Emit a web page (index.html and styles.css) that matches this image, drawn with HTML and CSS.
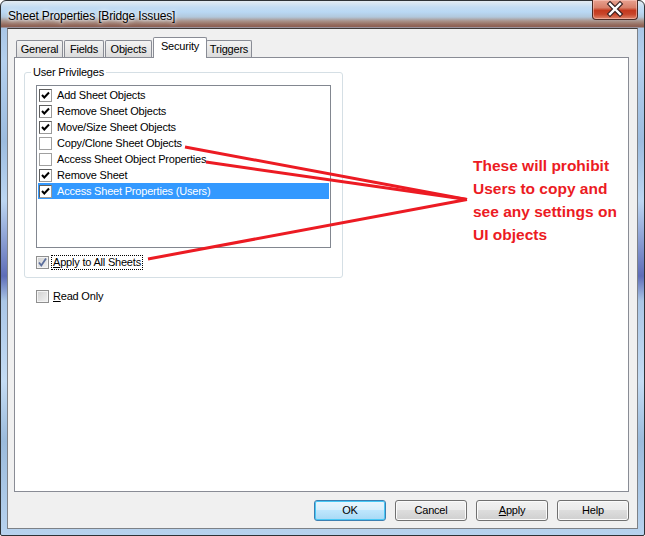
FILE: index.html
```html
<!DOCTYPE html>
<html>
<head>
<meta charset="utf-8">
<link rel="stylesheet" href="styles.css">
</head>
<body>
<div class="window">
  <div class="titlebar">
    <span class="title">Sheet Properties [Bridge Issues]</span>
    <div class="close">
      <svg width="46" height="20" viewBox="0 0 46 20">
        <path d="M18 5 L28 15 M28 5 L18 15" stroke="#3a2020" stroke-width="4.6" stroke-linecap="square" fill="none"/>
        <path d="M18 5 L28 15 M28 5 L18 15" stroke="#ffffff" stroke-width="2.4" stroke-linecap="square" fill="none"/>
      </svg>
    </div>
  </div>
  <div class="client">
    <div class="tabs">
      <div class="tab t-general">General</div>
      <div class="tab t-fields">Fields</div>
      <div class="tab t-objects">Objects</div>
      <div class="tab t-security selected">Security</div>
      <div class="tab t-triggers">Triggers</div>
    </div>
    <div class="panel">
      <fieldset class="group">
        <legend>User Privileges</legend>
        <div class="list">
          <div class="row"><span class="lcb"><svg width="11" height="11" viewBox="0 0 11 11"><path d="M2 5 L4.3 7.5 L9 2.5" stroke="#000" stroke-width="2" fill="none"/></svg></span>Add Sheet Objects</div>
          <div class="row"><span class="lcb"><svg width="11" height="11" viewBox="0 0 11 11"><path d="M2 5 L4.3 7.5 L9 2.5" stroke="#000" stroke-width="2" fill="none"/></svg></span>Remove Sheet Objects</div>
          <div class="row"><span class="lcb"><svg width="11" height="11" viewBox="0 0 11 11"><path d="M2 5 L4.3 7.5 L9 2.5" stroke="#000" stroke-width="2" fill="none"/></svg></span>Move/Size Sheet Objects</div>
          <div class="row"><span class="lcb off"></span>Copy/Clone Sheet Objects</div>
          <div class="row"><span class="lcb off"></span>Access Sheet Object Properties</div>
          <div class="row"><span class="lcb"><svg width="11" height="11" viewBox="0 0 11 11"><path d="M2 5 L4.3 7.5 L9 2.5" stroke="#000" stroke-width="2" fill="none"/></svg></span>Remove Sheet</div>
          <div class="row sel"><span class="lcb"><svg width="11" height="11" viewBox="0 0 11 11"><path d="M2 5 L4.3 7.5 L9 2.5" stroke="#000" stroke-width="2" fill="none"/></svg></span>Access Sheet Properties (Users)</div>
        </div>
        <div class="check apply">
          <span class="tcb"><svg width="11" height="11" viewBox="0 0 11 11"><path d="M2 5.5 L4.3 8.5 L9 1.5" stroke="#5b6e9c" stroke-width="1.8" fill="none"/></svg></span>
          <span class="focus"><u>A</u>pply to All Sheets</span>
        </div>
      </fieldset>
      <div class="check readonly">
        <span class="tcb"></span>
        <span class="lbl"><u>R</u>ead Only</span>
      </div>
    </div>
    <div class="buttons">
      <div class="btn default">OK</div>
      <div class="btn">Cancel</div>
      <div class="btn"><u>A</u>pply</div>
      <div class="btn">Help</div>
    </div>
  </div>
  <svg class="arrows" width="645" height="536" viewBox="0 0 645 536">
    <g stroke="#ec1b23" stroke-width="3" stroke-linecap="butt">
      <line x1="185" y1="147" x2="467" y2="199.5"/>
      <line x1="206" y1="162" x2="467" y2="199.5"/>
      <line x1="148" y1="259" x2="467" y2="199.5"/>
    </g>
  </svg>
  <div class="note">These will prohibit<br>Users to copy and<br>see any settings on<br>UI objects</div>
</div>
</body>
</html>
```
FILE: styles.css
```css
html, body {
  margin: 0;
  padding: 0;
  background: #ffffff;
}
body {
  width: 645px;
  height: 536px;
  overflow: hidden;
  font-family: "Liberation Sans", Arial, sans-serif;
  font-size: 11px;
  letter-spacing: -0.2px;
  color: #000;
}
.window {
  position: relative;
  width: 645px;
  height: 536px;
  box-sizing: border-box;
  border: 1px solid #2e3236;
  border-radius: 6px 6px 2px 2px;
  padding: 0 6px 6px 6px;
  display: flex;
  flex-direction: column;
  background:
    linear-gradient(to bottom,
      #e3ebf2 0px, #c4dcf2 6px, #b9d8f4 11px, #b2c8dc 16px,
      #a99289 20px, #93685b 24px, #8c5f52 26px, #a9c6e6 27px,
      #b4d0ee 60px, #9cbcdf 140px, #bcd6f2 200px, #5e6db8 275px, #aac6e6 300px,
      #c4dcf4 380px, #9bbbdc 440px, #b8d3ef 536px);
}
.titlebar {
  height: 27px;
  display: flex;
  justify-content: space-between;
  align-items: flex-start;
}
.title {
  font-family: "Liberation Sans", Arial, sans-serif;
  font-size: 12px;
  letter-spacing: -0.15px;
  line-height: 14px;
  padding: 8px 0 0 1px;
  color: #000;
  text-shadow: 0 0 6px #ffffff, 0 0 3px #ffffff;
}
.close {
  width: 46px;
  height: 20px;
  margin-top: -1px;
  box-sizing: border-box;
  border: 1px solid #4a2a24;
  border-top: none;
  border-radius: 0 0 4px 4px;
  background: linear-gradient(to bottom, #e8a190 0%, #d8806a 40%, #c4391e 55%, #c8452a 75%, #e0866a 100%);
  box-shadow: inset 0 0 0 1px rgba(255,210,200,0.5);
}
.close svg {
  display: block;
  margin: -1px 0 0 -1px;
}
.client {
  flex: 1;
  box-sizing: border-box;
  border: 1px solid #7d8187;
  border-top-color: #3f3a38;
  background: #f0f0f0;
  padding: 8px 8px 7px 6px;
  display: flex;
  flex-direction: column;
}
.tabs {
  height: 20px;
  display: flex;
  align-items: flex-end;
  padding-left: 2px;
}
.tab {
  height: 17px;
  box-sizing: border-box;
  border: 1px solid #898c95;
  border-bottom: none;
  background: linear-gradient(to bottom, #f3f3f3, #e5e5e5 60%, #dcdcdc);
  padding: 2px 0 0 0;
  text-align: center;
  line-height: 13px;
  margin-right: 1px;
  border-radius: 2px 2px 0 0;
}
.t-general { width: 47px; }
.t-fields { width: 40px; }
.t-objects { width: 47px; }
.t-security { width: 54px; }
.t-triggers { width: 46px; }
.tab.selected {
  height: 21px;
  margin: 0 -1px -1px 0;
  background: #ffffff;
  position: relative;
  z-index: 1;
}
.panel {
  flex: 1;
  box-sizing: border-box;
  border: 1px solid #898c95;
  background: #ffffff;
  padding: 8px 0 0 9px;
}
.group {
  margin: 0;
  width: 319px;
  box-sizing: border-box;
  border: 1px solid #d5dfe5;
  border-radius: 3px;
  padding: 0 11px 7px 11px;
  min-inline-size: 0;
}
.group legend {
  padding: 0 2px;
  margin-left: -5px;
  line-height: 13px;
}
.list {
  margin-top: 6px;
  width: 295px;
  height: 163px;
  box-sizing: border-box;
  border: 1px solid #828790;
  background: #ffffff;
  padding: 1px;
}
.row {
  height: 16px;
  display: flex;
  align-items: center;
  line-height: 16px;
  white-space: nowrap;
}
.row.sel {
  background: #3399ff;
  color: #ffffff;
}
.lcb {
  width: 13px;
  height: 13px;
  box-sizing: border-box;
  margin: 0 5px 0 1px;
  border: 1px solid #5f5f5f;
  border-right-color: #9a9a9a;
  border-bottom-color: #9a9a9a;
  background: #ffffff;
  display: flex;
  align-items: center;
  justify-content: center;
}
.lcb.off {
  border-color: #a0a0a0;
}
.lcb svg {
  display: block;
}
.check {
  display: flex;
  align-items: center;
  height: 15px;
  white-space: nowrap;
}
.apply {
  margin-top: 7px;
}
.readonly {
  margin: 11px 0 0 12px;
}
.tcb {
  width: 13px;
  height: 13px;
  box-sizing: border-box;
  border: 1px solid #8f8f8f;
  background: linear-gradient(135deg, #d0d0d0, #f2f2f2);
  box-shadow: inset 0 0 0 1px #f4f4f4;
  display: flex;
  align-items: center;
  justify-content: center;
  margin-right: 2px;
}
.tcb svg {
  display: block;
}
.focus {
  border: 1px dotted #000;
  padding: 0 1px;
  line-height: 13px;
}
.lbl {
  padding: 0 2px;
  line-height: 13px;
}
.buttons {
  margin-top: 8px;
  display: flex;
  justify-content: flex-end;
  gap: 9px;
}
.btn {
  width: 72px;
  height: 21px;
  box-sizing: border-box;
  border: 1px solid #707070;
  border-radius: 3px;
  background: linear-gradient(to bottom, #f2f2f2 0%, #ebebeb 45%, #dddddd 50%, #cfcfcf 100%);
  box-shadow: inset 0 0 0 1px #fbfbfb;
  text-align: center;
  line-height: 19px;
}
.btn.default {
  border-color: #3c7fb1;
  background: linear-gradient(to bottom, #eaf6fd 0%, #d9f0fc 45%, #bee6fd 50%, #a7d9f5 100%);
  box-shadow: inset 0 0 0 1px #48c8f5;
}
.arrows {
  position: absolute;
  left: -1px;
  top: -1px;
  pointer-events: none;
}
.note {
  position: absolute;
  left: 472px;
  top: 153px;
  font-family: "Liberation Sans", Arial, sans-serif;
  font-weight: bold;
  font-size: 15.5px;
  letter-spacing: 0;
  line-height: 23px;
  color: #ec1b23;
  white-space: nowrap;
}
```
